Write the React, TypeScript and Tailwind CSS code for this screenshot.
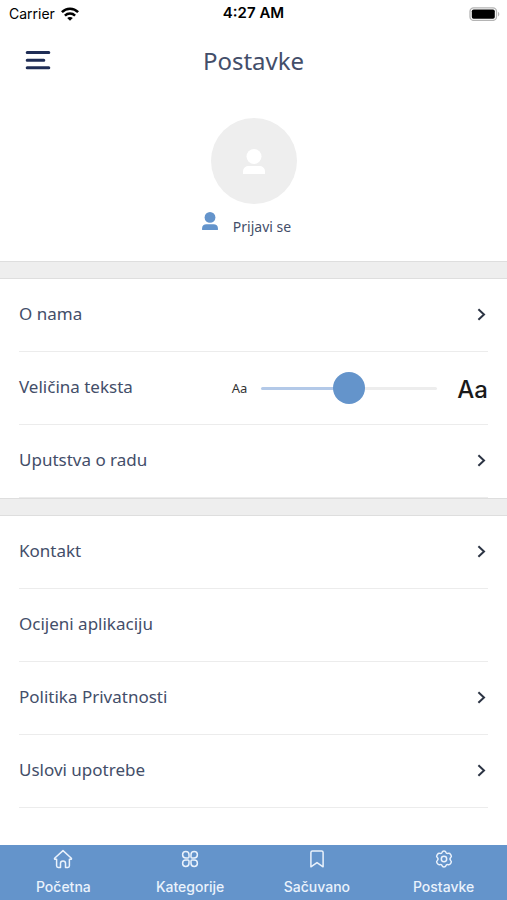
import { useState } from "react"
import type { CSSProperties, ReactNode } from "react"

function MenuIcon() {
    return (
        <svg width="26" height="20" viewBox="0 0 26 20" fill="none" stroke="#1f2d55" strokeWidth="3" strokeLinecap="round" aria-hidden="true">
            <path d="M2.2 2.4H23.8M2.2 10.2H18.8M2.2 17.8H23.8" />
        </svg>
    )
}

function WifiIcon() {
    return (
        <svg width="18" height="14" viewBox="0 0 18 14" fill="none" stroke="#000" strokeWidth="2.5" aria-hidden="true">
            <path d="M0.9 5.2C5.4 0.6 12.6 0.6 17.1 5.2" />
            <path d="M3.9 8.6C6.8 5.8 11.2 5.8 14.1 8.6" />
            <path d="M9 13.8L6.2 11C7.8 9.6 10.2 9.6 11.8 11Z" fill="#000" stroke="none" />
        </svg>
    )
}

function BatteryIcon() {
    return (
        <svg width="32" height="14" viewBox="0 0 32 14" aria-hidden="true">
            <rect x="1" y="0.8" width="26.5" height="12.6" rx="3.6" fill="#fff" stroke="#b4b4b4" strokeWidth="1.3" />
            <rect x="2.8" y="2.5" width="23" height="9.2" rx="1.8" fill="#000" />
            <path d="M29 4.8C30.8 5.6 30.8 8.6 29 9.4Z" fill="#b4b4b4" />
        </svg>
    )
}

function PersonIcon({ className }: { className: string }) {
    return (
        <svg className={className} viewBox="0 0 22 25" fill="currentColor" aria-hidden="true">
            <circle cx="11" cy="7.5" r="7.5" />
            <path d="M0 25V22.5C0 19 2.6 17 6 17H16C19.4 17 22 19 22 22.5V25Z" />
        </svg>
    )
}

function ChevronIcon() {
    return (
        <svg className="mr-[2px]" width="9" height="14" viewBox="0 0 9 14" fill="none" stroke="#2c3444" strokeWidth="2" aria-hidden="true">
            <path d="M1.4 1.3L7 6.5L1.4 11.7" />
        </svg>
    )
}

function NavIcon({ children }: { children: ReactNode }) {
    return (
        <svg width="20" height="20" viewBox="0 0 20 20" fill="none" stroke="currentColor" strokeWidth="1.5" strokeLinejoin="round" strokeLinecap="round" aria-hidden="true">
            {children}
        </svg>
    )
}

const tabs = [
    {
        label: "Početna",
        icon: <path d="M10 1.6L1.6 9.3C1.3 9.9 1.6 10.3 2.2 10.3H3.6V16.7C3.6 17.8 4.2 18.4 5.2 18.4H7.5V14.2C7.5 11.1 12.5 11.1 12.5 14.2V18.4H14.8C15.8 18.4 16.4 17.8 16.4 16.7V10.3H17.8C18.4 10.3 18.7 9.9 18.4 9.3Z" />,
    },
    {
        label: "Kategorije",
        icon: (
            <>
                <path d="M8 9H5.8A3.2 3.2 0 1 1 9 5.8V8Q9 9 8 9Z" />
                <path d="M12 9Q11 9 11 8V5.8A3.2 3.2 0 1 1 14.2 9Z" />
                <path d="M8 11Q9 11 9 12V14.2A3.2 3.2 0 1 1 5.8 11Z" />
                <path d="M12 11H14.2A3.2 3.2 0 1 1 11 14.2V12Q11 11 12 11Z" />
            </>
        ),
    },
    {
        label: "Sačuvano",
        icon: <path d="M3.9 17.8V3.4C3.9 2.4 4.5 1.9 5.4 1.9H14.6C15.5 1.9 16.1 2.4 16.1 3.4V17.8L10 13.6Z" />,
    },
    {
        label: "Postavke",
        icon: (
            <>
                <circle cx="10" cy="10" r="2.7" />
                <path d="M8.1 3.3Q8.5 2 10 2T11.9 3.3Q12.4 4.8 13.9 4.4Q15.6 3.9 16.5 5.3L17.1 6.3Q17.8 7.6 16.7 8.5Q15.2 10 16.7 11.5Q17.8 12.4 17.1 13.7L16.5 14.7Q15.6 16.1 13.9 15.6Q12.4 15.2 11.9 16.7Q11.5 18 10 18T8.1 16.7Q7.6 15.2 6.1 15.6Q4.4 16.1 3.5 14.7L2.9 13.7Q2.2 12.4 3.3 11.5Q4.8 10 3.3 8.5Q2.2 7.6 2.9 6.3L3.5 5.3Q4.4 3.9 6.1 4.4Q7.6 4.8 8.1 3.3Z" />
            </>
        ),
    },
]

const rowClass = "flex items-center justify-between h-[73px] border-b border-[#ececec] text-[17px] leading-6"

function Row({ label, arrow = true }: { label: string; arrow?: boolean }) {
    return (
        <li>
            <a href="#" className={rowClass}>
                <span className="pb-[2px]">{label}</span>
                {arrow && <ChevronIcon />}
            </a>
        </li>
    )
}

function TextSizeRow() {
    const [size, setSize] = useState(50)
    const fill = { "--fill": `${size}%` } as CSSProperties

    return (
        <li className={rowClass}>
            <label htmlFor="text-size" className="pb-[2px]">Veličina teksta</label>
            <div className="flex items-center text-[#333]">
                <span className="text-[13px]">Aa</span>
                <input
                    id="text-size"
                    type="range"
                    value={size}
                    onChange={(e) => setSize(Number(e.target.value))}
                    style={fill}
                    className="w-44 h-8 ml-[14px] mr-5 appearance-none bg-transparent cursor-pointer [&::-webkit-slider-runnable-track]:h-[3px] [&::-webkit-slider-runnable-track]:rounded-full [&::-webkit-slider-runnable-track]:bg-[linear-gradient(to_right,#b3c9e8_var(--fill),#ededed_var(--fill))] [&::-webkit-slider-thumb]:appearance-none [&::-webkit-slider-thumb]:size-8 [&::-webkit-slider-thumb]:-mt-[15px] [&::-webkit-slider-thumb]:rounded-full [&::-webkit-slider-thumb]:bg-[#6494cb]"
                />
                <span className="pt-1 font-['Inter',sans-serif] font-medium text-[24px] leading-7 text-[#1a1a1a]">Aa</span>
            </div>
        </li>
    )
}

function Divider() {
    return <div className="h-[18px] bg-[#eeeeee] border-y border-[#dedede]" />
}

export default function App() {
    return (
        <div className="flex flex-col min-h-screen bg-white text-[#434e69] font-['Noto_Sans',sans-serif]">
            <div className="grid grid-cols-[1fr_auto_1fr] items-center h-7 pb-px px-[6px] text-black text-[14px] font-['Inter',sans-serif]">
                <div className="flex items-center gap-[6px] pl-[3px]">
                    <span>Carrier</span>
                    <WifiIcon />
                </div>
                <span className="font-semibold text-[15px]">4:27 AM</span>
                <div className="flex justify-end">
                    <BatteryIcon />
                </div>
            </div>

            <header className="grid grid-cols-[1fr_auto_1fr] items-center h-16 px-[25px]">
                <button type="button" aria-label="Meni" className="justify-self-start">
                    <MenuIcon />
                </button>
                <h1 className="pt-[2px] text-[24px] leading-8">Postavke</h1>
            </header>

            <section className="flex flex-col items-center h-[169px] pt-[26px]">
                <div className="flex items-center justify-center size-[86px] rounded-full bg-[#eeeeee] text-white">
                    <PersonIcon className="w-[22px] h-[25px]" />
                </div>
                <a href="#" className="flex items-start gap-[15px] pt-2 pr-[14px] text-[14px] leading-5">
                    <PersonIcon className="w-4 h-[18px] text-[#6494cb]" />
                    <span className="pt-[5px]">Prijavi se</span>
                </a>
            </section>

            <main className="pb-[90px]">
                <Divider />
                <ul className="px-[19px]">
                    <Row label="O nama" />
                    <TextSizeRow />
                    <Row label="Uputstva o radu" />
                </ul>
                <Divider />
                <ul className="px-[19px]">
                    <Row label="Kontakt" />
                    <Row label="Ocijeni aplikaciju" arrow={false} />
                    <Row label="Politika Privatnosti" />
                    <Row label="Uslovi upotrebe" />
                </ul>
            </main>

            <nav className="fixed inset-x-0 bottom-0 grid grid-cols-4 h-[55px] bg-[#6494cb] text-[#eaf2fc] text-[14px] font-medium font-['Inter',sans-serif]">
                {tabs.map((tab) => (
                    <a key={tab.label} href="#" className="flex flex-col items-center gap-2 pt-1">
                        <NavIcon>{tab.icon}</NavIcon>
                        <span className="leading-5">{tab.label}</span>
                    </a>
                ))}
            </nav>
        </div>
    )
}
